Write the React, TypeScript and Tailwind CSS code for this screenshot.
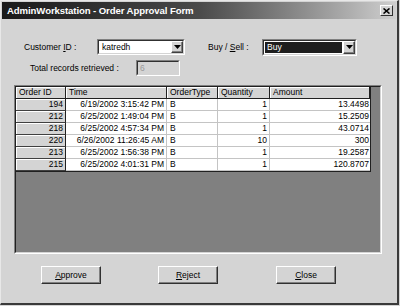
import React from "react";

const rows = [
  ["194", "6/19/2002 3:15:42 PM", "B", "1", "13.4498"],
  ["212", "6/25/2002 1:49:04 PM", "B", "1", "15.2509"],
  ["218", "6/25/2002 4:57:34 PM", "B", "1", "43.0714"],
  ["220", "6/26/2002 11:26:45 AM", "B", "10", "300"],
  ["213", "6/25/2002 1:56:38 PM", "B", "1", "19.2587"],
  ["215", "6/25/2002 4:01:31 PM", "B", "1", "120.8707"],
];

function Arrow() {
  return (
    <div className="w-[12px] h-full bg-[#d4d4d4] border-t border-l border-t-white border-l-white border-b border-r border-b-[#404040] border-r-[#404040] shadow-[inset_-1px_-1px_0_#808080] flex items-center justify-center">
      <svg width="7" height="4" viewBox="0 0 7 4">
        <polygon points="0,0 7,0 3.5,4" fill="#000" />
      </svg>
    </div>
  );
}

function Btn({ children }: { children: React.ReactNode }) {
  return (
    <div className="w-[60px] h-[18px] bg-[#d4d4d4] border-t border-l border-t-white border-l-white border-b border-r border-b-[#303030] border-r-[#303030] shadow-[inset_-1px_-1px_0_#808080] flex items-center justify-center text-[8.5px] text-black">
      {children}
    </div>
  );
}

export default function App() {
  return (
    <div
      className="w-[400px] h-[306px] bg-[#d4d4d4]"
      style={{ fontFamily: '"Liberation Sans", Arial, sans-serif' }}
    >
      <div className="w-[399px] h-[305px] border-t border-l border-t-[#e8e8e8] border-l-[#e8e8e8] border-r-2 border-b-2 border-r-[#3a3a3a] border-b-[#3a3a3a] flex flex-col">
        <div className="mx-[1px] mt-[1px] h-[17px] bg-gradient-to-r from-[#1a1a1a] via-[#4a4a4a] to-[#cfcfcf] flex items-center pl-[5px] pr-[3px]">
          <span className="text-white font-bold text-[9.6px] tracking-[-0.1px] leading-none">
            AdminWorkstation - Order Approval Form
          </span>
          <div className="ml-auto w-[13px] h-[11px] bg-[#d4d4d4] border-t border-l border-t-white border-l-white border-b border-r border-b-[#303030] border-r-[#303030] flex items-center justify-center">
            <svg width="7" height="6" viewBox="0 0 7 6">
              <path d="M0.5 0.5 L6.5 5.5 M6.5 0.5 L0.5 5.5" stroke="#000" strokeWidth="1.6" />
            </svg>
          </div>
        </div>

        {/* row 1 */}
        <div className="flex items-center mt-[20px] h-[16px] text-[8.5px] text-black">
          <div className="w-[96px] pl-[23px]">
            Customer <span className="underline">I</span>D :
          </div>
          <div className="w-[88px] h-[16px] border-t border-l border-t-[#808080] border-l-[#808080] border-b border-r border-b-white border-r-white">
            <div className="h-full border-t border-l border-t-[#303030] border-l-[#303030] border-b border-r border-b-[#d4d4d4] border-r-[#d4d4d4] bg-white flex items-center">
              <span className="pl-[3px] flex-1">katredh</span>
              <Arrow />
            </div>
          </div>
          <div className="w-[23px]" />
          <div className="w-[54px]">
            Buy / <span className="underline">S</span>ell :
          </div>
          <div className="w-[95px] h-[17px] border-t border-l border-t-[#808080] border-l-[#808080] border-b border-r border-b-white border-r-white">
            <div className="h-full border-t border-l border-t-[#303030] border-l-[#303030] border-b border-r border-b-[#d4d4d4] border-r-[#d4d4d4] bg-white flex items-center">
              <div className="flex-1 h-full p-[1px]">
                <div className="h-full bg-[#1e1e1e] text-white flex items-center pl-[2px]">Buy</div>
              </div>
              <Arrow />
            </div>
          </div>
        </div>

        {/* row 2 */}
        <div className="flex items-center mt-[5px] h-[16px] text-[8.5px] text-black">
          <div className="w-[135px] pl-[29px]">Total records retrieved :</div>
          <div className="w-[44px] h-[16px] border-t border-l border-t-[#808080] border-l-[#808080] border-b border-r border-b-white border-r-white">
            <div className="h-full border-t border-l border-t-[#303030] border-l-[#303030] border-b border-r border-b-[#d4d4d4] border-r-[#d4d4d4] flex items-center pl-[2px] text-[#9a9a9a]">
              6
            </div>
          </div>
        </div>

        {/* grid */}
        <div className="ml-[13px] mt-[9px] w-[368px] h-[169px] border-t border-l border-t-[#808080] border-l-[#808080] border-b border-r border-b-white border-r-white">
          <div className="h-full border-t border-l border-t-[#202020] border-l-[#202020] border-b border-r border-b-[#d4d4d4] border-r-[#d4d4d4] bg-[#808080]">
            <div className="w-[355px] border-r border-b border-r-[#202020] border-b-[#202020] text-[8.5px] text-black leading-[11px]">
              <div className="flex h-[12px] bg-[#d4d4d4]">
                {[
                  ["Order ID", "w-[50px]"],
                  ["Time", "w-[101px]"],
                  ["OrderType", "w-[51px]"],
                  ["Quantity", "w-[52px]"],
                  ["Amount", "w-[100px]"],
                ].map(([t, w], i) => (
                  <div
                    key={i}
                    className={`${w} h-full border-r border-b border-r-[#202020] border-b-[#202020] shadow-[inset_1px_1px_0_#ffffff] pl-[3px] overflow-hidden whitespace-nowrap`}
                  >
                    {t}
                  </div>
                ))}
              </div>
              {rows.map((r, i) => (
                <div key={i} className="flex h-[12px]">
                  <div className="w-[50px] h-full bg-[#d4d4d4] border-r border-b border-r-[#202020] border-b-[#404040] shadow-[inset_1px_1px_0_#ffffff] text-right pr-[2px]">
                    {r[0]}
                  </div>
                  <div className="w-[101px] h-full bg-white border-r border-b border-r-[#c4c4c4] border-b-[#c4c4c4] text-right pr-[2px] whitespace-nowrap">
                    {r[1]}
                  </div>
                  <div className="w-[51px] h-full bg-white border-r border-b border-r-[#c4c4c4] border-b-[#c4c4c4] pl-[3px]">
                    {r[2]}
                  </div>
                  <div className="w-[52px] h-full bg-white border-r border-b border-r-[#c4c4c4] border-b-[#c4c4c4] text-right pr-[2px]">
                    {r[3]}
                  </div>
                  <div className="w-[100px] h-full bg-white border-b border-b-[#c4c4c4] text-right pr-[1px]">
                    {r[4]}
                  </div>
                </div>
              ))}
            </div>
          </div>
        </div>

        {/* buttons */}
        <div className="flex mt-[12px]">
          <div className="ml-[40px]">
            <Btn>
              <span className="underline">A</span>pprove
            </Btn>
          </div>
          <div className="ml-[57px]">
            <Btn>
              <span className="underline">R</span>eject
            </Btn>
          </div>
          <div className="ml-[58px]">
            <Btn>
              <span className="underline">C</span>lose
            </Btn>
          </div>
        </div>
      </div>
    </div>
  );
}
